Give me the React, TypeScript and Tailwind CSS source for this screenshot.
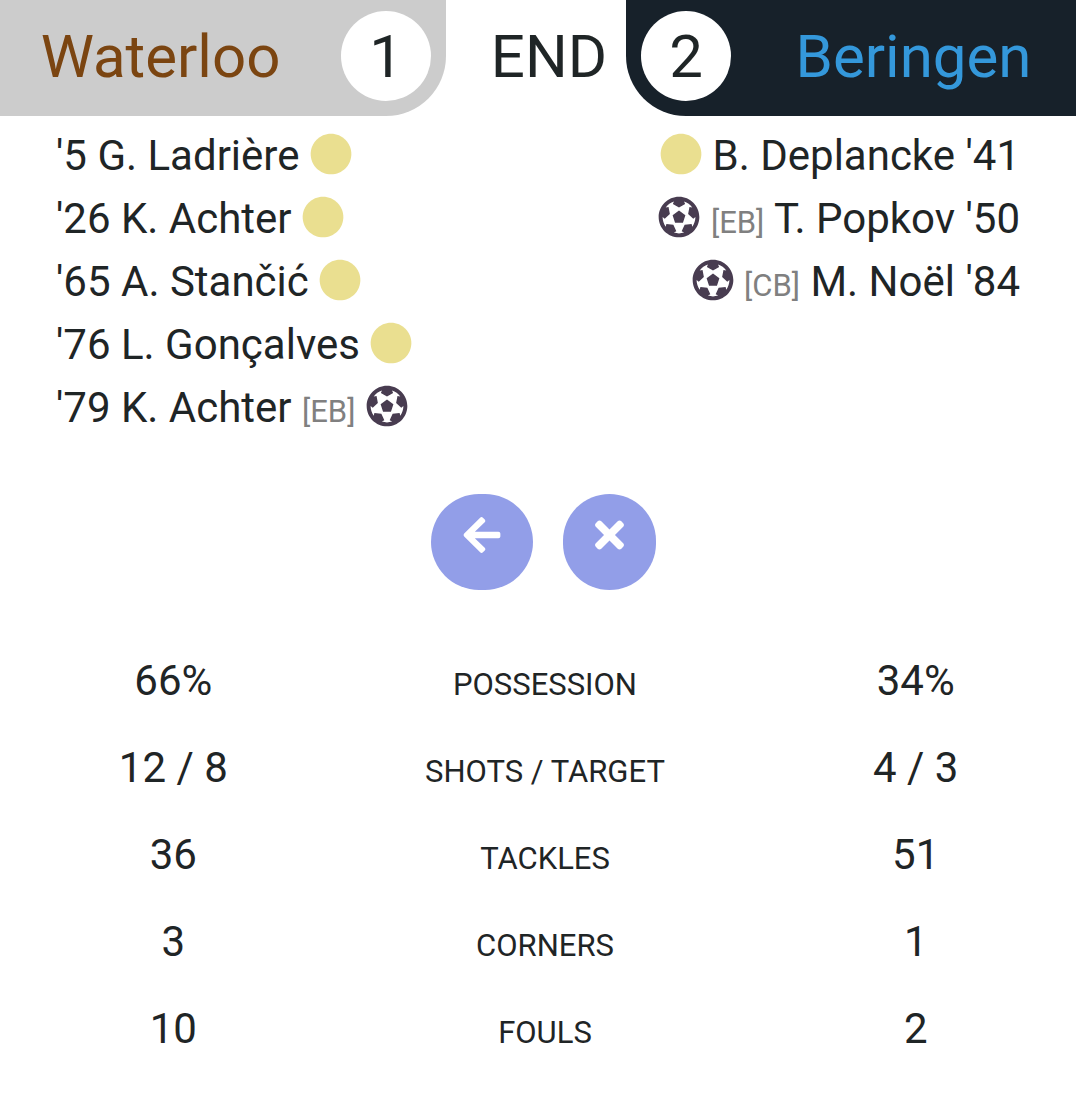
import type { ReactNode } from 'react';
import { FaArrowLeft, FaCircle, FaFutbol, FaTimes } from 'react-icons/fa';

type MatchEvent = {
  minute: string;
  player: string;
  kind: 'card' | 'goal';
  tag?: string;
};

const homeEvents: MatchEvent[] = [
  { minute: "'5", player: 'G. Ladrière', kind: 'card' },
  { minute: "'26", player: 'K. Achter', kind: 'card' },
  { minute: "'65", player: 'A. Stančić', kind: 'card' },
  { minute: "'76", player: 'L. Gonçalves', kind: 'card' },
  { minute: "'79", player: 'K. Achter', kind: 'goal', tag: '[EB]' },
];

const awayEvents: MatchEvent[] = [
  { minute: "'41", player: 'B. Deplancke', kind: 'card' },
  { minute: "'50", player: 'T. Popkov', kind: 'goal', tag: '[EB]' },
  { minute: "'84", player: 'M. Noël', kind: 'goal', tag: '[CB]' },
];

const stats = [
  { label: 'POSSESSION', home: '66%', away: '34%' },
  { label: 'SHOTS / TARGET', home: '12 / 8', away: '4 / 3' },
  { label: 'TACKLES', home: '36', away: '51' },
  { label: 'CORNERS', home: '3', away: '1' },
  { label: 'FOULS', home: '10', away: '2' },
];

function Score({ children }: { children: ReactNode }) {
  return (
    <span className="flex size-[90px] shrink-0 items-center justify-center rounded-full bg-white pt-0.5 text-[#1f2526]">
      {children}
    </span>
  );
}

function EventIcon({ kind }: { kind: MatchEvent['kind'] }) {
  const base = 'inline-block size-[42px] align-[-5px]';
  return kind === 'goal' ? (
    <FaFutbol className={`${base} text-[#483c50]`} aria-label="Goal" />
  ) : (
    <FaCircle className={`${base} text-[#eadf90]`} aria-label="Yellow card" />
  );
}

function Tag({ children }: { children: ReactNode }) {
  return <span className="text-[31px] leading-none text-[#808080]">{children}</span>;
}

export default function App() {
  return (
    <main className="bg-white font-[Roboto,sans-serif] text-[42px] leading-[63px] text-[#1f2526]">
      <header className="grid grid-cols-[446fr_180fr_450fr] text-[60px] leading-[88px]">
        <div className="flex items-center rounded-br-[60px] bg-[#cccccc] pt-[11px] pr-[15px] pb-[15px]">
          <h1 className="flex-1 pt-0.5 pr-5 text-center text-[#7b4511]">Waterloo</h1>
          <Score>1</Score>
        </div>
        <div className="pt-[13px] pl-[26px] text-center">END</div>
        <div className="flex items-center rounded-bl-[60px] bg-[#17212a] pt-[11px] pb-[15px] pl-[15px]">
          <Score>2</Score>
          <h1 className="flex-1 pt-0.5 pl-5 text-center text-[#3498db]">Beringen</h1>
        </div>
      </header>

      <section className="flex justify-between px-14 pt-2">
        <ul>
          {homeEvents.map((e) => (
            <li key={e.minute}>
              {e.minute} {e.player} {e.tag && <><Tag>{e.tag}</Tag>{' '}</>}
              <EventIcon kind={e.kind} />
            </li>
          ))}
        </ul>
        <ul className="text-right">
          {awayEvents.map((e) => (
            <li key={e.minute}>
              <EventIcon kind={e.kind} /> {e.tag && <><Tag>{e.tag}</Tag>{' '}</>}
              {e.player} {e.minute}
            </li>
          ))}
        </ul>
      </section>

      <nav className="flex justify-center gap-[30px] pt-[55px] pl-[11px]">
        <button
          type="button"
          aria-label="Back"
          className="rounded-[48px] bg-[#929ee8] px-8 pt-5 pb-[34px] text-white"
        >
          <FaArrowLeft className="h-[42px] w-[38px]" />
        </button>
        <button
          type="button"
          aria-label="Close"
          className="rounded-[48px] bg-[#929ee8] px-8 pt-5 pb-[34px] text-white"
        >
          <FaTimes className="h-[42px] w-[29px]" />
        </button>
      </nav>

      <div className="pt-[47px] pb-6 pl-3.5">
        <table className="w-full table-fixed text-center">
          <tbody>
            {stats.map((s) => (
              <tr key={s.label}>
                <td className="w-[30%] py-3">{s.home}</td>
                <th scope="row" className="py-3 font-normal">
                  <span className="text-[31px] leading-none">{s.label}</span>
                </th>
                <td className="w-[30%] py-3 pr-0.5">{s.away}</td>
              </tr>
            ))}
          </tbody>
        </table>
      </div>
    </main>
  );
}
